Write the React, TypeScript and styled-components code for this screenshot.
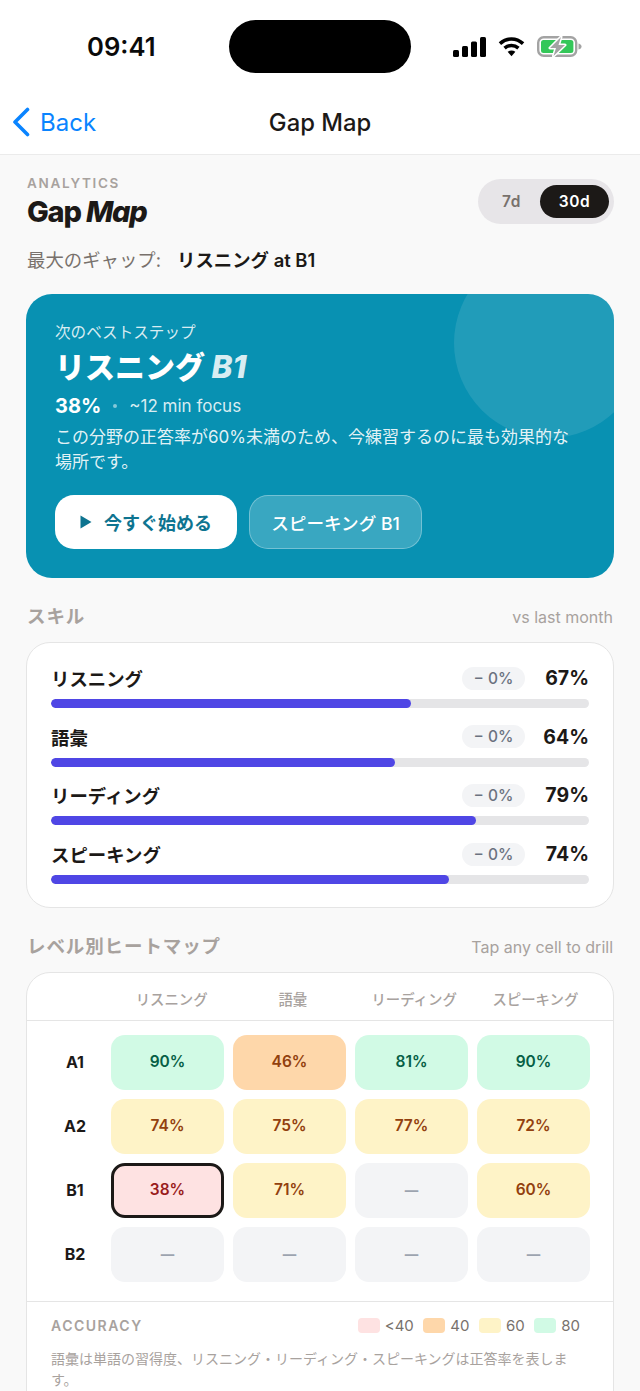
import React from "react";
import styled, { createGlobalStyle } from "styled-components";

const Global = createGlobalStyle`
  html, body { margin: 0; padding: 0; background: #f9f9f9; }
  body { width: 640px; height: 1391px; overflow: hidden; font-family: Inter, "Noto Sans CJK JP", sans-serif; -webkit-font-smoothing: antialiased; }
  * { box-sizing: border-box; }
`;

const Screen = styled.div`
  width: 640px;
  height: 1391px;
  overflow: hidden;
  display: flex;
  flex-direction: column;
`;

const TopArea = styled.header`
  height: 155px;
  background: #fff;
  border-bottom: 1px solid #ebebeb;
  flex: none;
`;

const StatusBar = styled.div`
  height: 88px;
  padding-top: 20px;
  display: grid;
  grid-template-columns: 229px 182px 229px;
`;

const Time = styled.div`
  height: 53px;
  padding-left: 87px;
  display: flex;
  align-items: center;
  font-size: 25.6px;
  font-weight: 600;
  color: #0a0a0a;
`;

const Island = styled.div`
  height: 53px;
  border-radius: 27px;
  background: #000;
`;

const StatusIcons = styled.div`
  height: 53px;
  padding-left: 42px;
  display: flex;
  align-items: center;
  gap: 12px;
`;

const NavBar = styled.div`
  height: 66px;
  padding: 2px 0 0 12px;
  position: relative;
  display: flex;
  align-items: center;
`;

const BackLink = styled.div`
  display: flex;
  align-items: center;
  gap: 10px;
  color: #0a84ff;
  font-size: 24px;
  font-weight: 400;
`;

const NavTitle = styled.div`
  position: absolute;
  left: 0;
  right: 0;
  text-align: center;
  font-size: 23.8px;
  font-weight: 500;
  color: #1c1917;
`;

const Content = styled.main`
  padding: 20px 26px 0;
  display: flex;
  flex-direction: column;
`;

const TitleRow = styled.div`
  display: flex;
  justify-content: space-between;
  align-items: flex-start;
`;

const Eyebrow = styled.div`
  font-size: 13.5px;
  line-height: 17px;
  font-weight: 600;
  letter-spacing: 1.7px;
  color: #a8a29e;
  padding-left: 1px;
`;

const PageTitle = styled.h1`
  margin: 2px 0 0;
  font-size: 29px;
  line-height: 36px;
  font-weight: 800;
  letter-spacing: -1.2px;
  color: #1c1917;
  padding-left: 1px;
  em { font-style: italic; }
`;

const Toggle = styled.div`
  margin-top: 4px;
  width: 136px;
  height: 45px;
  border-radius: 23px;
  background: #e7e5e8;
  padding: 6px 5px;
  display: grid;
  grid-template-columns: 1fr 69px;
`;

const ToggleOption = styled.div<{ $active?: boolean }>`
  border-radius: 17px;
  display: flex;
  align-items: center;
  justify-content: center;
  font-size: 15.5px;
  font-weight: 600;
  letter-spacing: 0.6px;
  color: ${(p) => (p.$active ? "#fff" : "#78716c")};
  background: ${(p) => (p.$active ? "#1c1917" : "transparent")};
`;

const GapLine = styled.div`
  margin-top: 18px;
  padding-left: 1px;
  display: flex;
  gap: 16px;
  font-size: 18.4px;
  line-height: 24px;
  color: #78716c;
  strong { color: #1c1917; font-weight: 600; }
`;

const HeroCard = styled.section`
  position: relative;
  overflow: hidden;
  margin-top: 22px;
  height: 284px;
  border-radius: 26px;
  background: #0891b2;
  padding: 29px 29px;
  color: #fff;
`;

const HeroCircle = styled.div`
  position: absolute;
  top: -46px;
  right: -30px;
  width: 190px;
  height: 190px;
  border-radius: 50%;
  background: rgba(255, 255, 255, 0.1);
`;

const HeroInner = styled.div`
  position: relative;
  display: flex;
  flex-direction: column;
`;

const HeroEyebrow = styled.div`
  font-size: 15.6px;
  line-height: 20px;
  color: rgba(255, 255, 255, 0.85);
`;

const HeroTitle = styled.h2`
  margin: 0;
  margin-top: 4px;
  font-size: 30px;
  line-height: 40px;
  font-weight: 800;
  em { font-size: 31.5px; font-style: italic; color: rgba(255, 255, 255, 0.85); }
`;

const HeroMeta = styled.div`
  margin-top: 6px;
  display: flex;
  align-items: center;
  gap: 12px;
  font-size: 17px;
  line-height: 26px;
  color: rgba(255, 255, 255, 0.85);
  strong { font-size: 20px; font-weight: 700; color: #fff; }
  i { width: 4px; height: 4px; border-radius: 50%; background: rgba(255, 255, 255, 0.5); }
`;

const HeroText = styled.p`
  margin: 6px 0 0;
  font-size: 17px;
  line-height: 25px;
  color: rgba(255, 255, 255, 0.9);
  width: 530px;
`;

const HeroActions = styled.div`
  margin-top: 20px;
  display: flex;
  gap: 12px;
`;

const PrimaryButton = styled.div`
  width: 182px;
  height: 54px;
  border-radius: 19px;
  background: #fff;
  color: #0e7490;
  display: flex;
  align-items: center;
  justify-content: center;
  gap: 12px;
  font-size: 18px;
  font-weight: 700;
`;

const SecondaryButton = styled.div`
  width: 173px;
  height: 54px;
  border-radius: 19px;
  background: rgba(255, 255, 255, 0.2);
  border: 1.5px solid rgba(255, 255, 255, 0.3);
  display: flex;
  align-items: center;
  justify-content: center;
  font-size: 17.6px;
  font-weight: 500;
`;

const SectionHead = styled.div`
  margin-top: 25px;
  height: 26px;
  display: flex;
  justify-content: space-between;
  align-items: center;
  padding: 0 1px;
`;

const SectionTitle = styled.h3`
  margin: 0 0 2px;
  font-size: 18.5px;
  font-weight: 700;
  letter-spacing: 0.9px;
  color: #a8a29e;
`;

const SectionNote = styled.span`
  margin-top: 2px;
  font-size: 16px;
  color: #a8a29e;
`;

const Card = styled.section`
  background: #fff;
  border: 1.5px solid #e5e5e5;
  border-radius: 24px;
`;

const SkillCard = styled(Card)`
  margin-top: 13px;
  height: 266px;
  padding: 23px 24px 0;
  display: flex;
  flex-direction: column;
  gap: 16.7px;
`;

const SkillRow = styled.div`
  display: flex;
  flex-direction: column;
  gap: 9px;
`;

const SkillTop = styled.div`
  height: 24px;
  display: flex;
  align-items: center;
`;

const SkillName = styled.div`
  flex: 1;
  font-size: 18.4px;
  font-weight: 700;
  color: #1c1917;
`;

const DeltaChip = styled.div`
  width: 63px;
  height: 23px;
  border-radius: 12px;
  background: #f3f4f6;
  color: #6b7280;
  font-size: 15.5px;
  font-weight: 500;
  display: flex;
  align-items: center;
  justify-content: center;
`;

const SkillPct = styled.div`
  width: 64px;
  text-align: right;
  font-size: 19.5px;
  font-weight: 700;
  color: #1c1917;
`;

const Track = styled.div`
  height: 9px;
  border-radius: 5px;
  background: #e5e5e7;
  overflow: hidden;
`;

const Fill = styled.div`
  height: 100%;
  border-radius: 5px;
  background: #4f46e5;
`;

const HeatCard = styled(Card)`
  margin-top: 13px;
  height: 520px;
`;

const HeatHeader = styled.div`
  height: 48px;
  border-bottom: 1.5px solid #e5e5e5;
  padding: 3px 17px 0 84px;
  display: grid;
  grid-template-columns: repeat(4, 1fr);
  align-items: center;
`;

const HeatColumn = styled.div`
  text-align: center;
  font-size: 14.4px;
  font-weight: 500;
  color: #a8a29e;
`;

const HeatBody = styled.div`
  height: 281px;
  padding: 14px 21px 0 25px;
  display: grid;
  grid-template-columns: 50px repeat(4, 113px);
  grid-auto-rows: 55px;
  column-gap: 9px;
  row-gap: 9px;
  border-bottom: 1.5px solid #e5e5e5;
`;

const RowLabel = styled.div`
  padding: 0 4px 2px 0;
  display: flex;
  align-items: center;
  justify-content: center;
  font-size: 16px;
  font-weight: 700;
  color: #1c1917;
`;

const tones = {
  green: ["#d1fae5", "#065f46"],
  orange: ["#fed7aa", "#92400e"],
  yellow: ["#fef3c7", "#92400e"],
  red: ["#fee2e2", "#991b1b"],
  empty: ["#f3f4f6", "#9ca3af"],
} as const;
type Tone = keyof typeof tones;

const Cell = styled.div<{ $tone: Tone; $selected?: boolean }>`
  padding-bottom: 2px;
  border-radius: 14px;
  background: ${(p) => tones[p.$tone][0]};
  color: ${(p) => tones[p.$tone][1]};
  border: ${(p) => (p.$selected ? "3px solid #1c1917" : "none")};
  display: flex;
  align-items: center;
  justify-content: center;
  font-size: ${(p) => (p.$tone === "empty" ? "13.5px" : "15.5px")};
  font-weight: ${(p) => (p.$tone === "empty" ? 800 : 600)};
`;

const Footer = styled.div`
  padding: 11px 24px 0;
`;

const LegendRow = styled.div`
  height: 24px;
  display: flex;
  align-items: center;
  justify-content: space-between;
  padding-right: 9px;
`;

const LegendTitle = styled.div`
  font-size: 14px;
  font-weight: 600;
  letter-spacing: 1.5px;
  color: #a8a29e;
`;

const Legend = styled.div`
  display: flex;
  gap: 9.5px;
`;

const LegendItem = styled.div`
  display: flex;
  align-items: center;
  gap: 5px;
  font-size: 15px;
  color: #78716c;
`;

const Swatch = styled.span<{ $tone: Tone }>`
  width: 22px;
  height: 15px;
  border-radius: 4px;
  background: ${(p) => tones[p.$tone][0]};
`;

const FootNote = styled.p`
  margin: 11px 0 0;
  font-size: 14px;
  line-height: 21px;
  color: #a8a29e;
`;

const skills = [
  { name: "リスニング", pct: 67 },
  { name: "語彙", pct: 64 },
  { name: "リーディング", pct: 79 },
  { name: "スピーキング", pct: 74 },
];

const columns = ["リスニング", "語彙", "リーディング", "スピーキング"];

const heat: { level: string; cells: { v: string; t: Tone; s?: boolean }[] }[] = [
  { level: "A1", cells: [{ v: "90%", t: "green" }, { v: "46%", t: "orange" }, { v: "81%", t: "green" }, { v: "90%", t: "green" }] },
  { level: "A2", cells: [{ v: "74%", t: "yellow" }, { v: "75%", t: "yellow" }, { v: "77%", t: "yellow" }, { v: "72%", t: "yellow" }] },
  { level: "B1", cells: [{ v: "38%", t: "red", s: true }, { v: "71%", t: "yellow" }, { v: "—", t: "empty" }, { v: "60%", t: "yellow" }] },
  { level: "B2", cells: [{ v: "—", t: "empty" }, { v: "—", t: "empty" }, { v: "—", t: "empty" }, { v: "—", t: "empty" }] },
];

const legend: { label: string; t: Tone }[] = [
  { label: "<40", t: "red" },
  { label: "40", t: "orange" },
  { label: "60", t: "yellow" },
  { label: "80", t: "green" },
];

const Signal = () => (
  <svg width="33" height="20" viewBox="0 0 33 20">
    <rect x="0" y="13" width="6" height="7" rx="1.5" fill="#000" />
    <rect x="9" y="9" width="6" height="11" rx="1.5" fill="#000" />
    <rect x="18" y="4.5" width="6" height="15.5" rx="1.5" fill="#000" />
    <rect x="27" y="0" width="6" height="20" rx="1.5" fill="#000" />
  </svg>
);

const Wifi = () => (
  <svg width="27" height="21" viewBox="0 0 28 21" fill="none">
    <path d="M2 7.5C9 1 19 1 26 7.5" stroke="#000" strokeWidth="3.6" />
    <path d="M6.8 12.2C11 8.4 17 8.4 21.2 12.2" stroke="#000" strokeWidth="3.6" />
    <path d="M10 16 14 20.5 18 16C15.6 14.2 12.4 14.2 10 16Z" fill="#000" />
  </svg>
);

const Battery = () => (
  <svg width="45" height="21" viewBox="0 0 45 21" fill="none">
    <rect x="1.2" y="1.2" width="38" height="18.6" rx="5.5" stroke="#a3a3a3" strokeWidth="2.4" />
    <rect x="4" y="4" width="32.4" height="13" rx="2.5" fill="#34c759" />
    <path d="M24 1 13 12H19L16.5 20 28 9H21.5Z" fill="#a3a3a3" stroke="#fff" strokeWidth="3" strokeLinejoin="round" paintOrder="stroke" />
    <path d="M41.5 7.5C43.5 8 44.5 9 44.5 10.5S43.5 13 41.5 13.5Z" fill="#a3a3a3" />
  </svg>
);

const Chevron = () => (
  <svg width="18" height="30" viewBox="0 0 18 30" fill="none">
    <path d="M15.5 2.5 3 15l12.5 12.5" stroke="#0a84ff" strokeWidth="3.6" strokeLinecap="round" strokeLinejoin="round" />
  </svg>
);

const Play = () => (
  <svg width="12" height="14" viewBox="0 0 12 14">
    <path d="M0.5 0.5 11.5 7 0.5 13.5Z" fill="#0e7490" />
  </svg>
);

export default function App() {
  return (
    <Screen>
      <Global />
      <TopArea>
        <StatusBar>
          <Time>09:41</Time>
          <Island />
          <StatusIcons>
            <Signal />
            <Wifi />
            <Battery />
          </StatusIcons>
        </StatusBar>
        <NavBar>
          <BackLink>
            <Chevron />
            Back
          </BackLink>
          <NavTitle>Gap Map</NavTitle>
        </NavBar>
      </TopArea>
      <Content>
        <TitleRow>
          <div>
            <Eyebrow>ANALYTICS</Eyebrow>
            <PageTitle>
              Gap <em>Map</em>
            </PageTitle>
          </div>
          <Toggle>
            <ToggleOption>7d</ToggleOption>
            <ToggleOption $active>30d</ToggleOption>
          </Toggle>
        </TitleRow>
        <GapLine>
          <span>最大のギャップ:</span>
          <strong>リスニング at B1</strong>
        </GapLine>
        <HeroCard>
          <HeroCircle />
          <HeroInner>
            <HeroEyebrow>次のベストステップ</HeroEyebrow>
            <HeroTitle>
              リスニング <em>B1</em>
            </HeroTitle>
            <HeroMeta>
              <strong>38%</strong>
              <i />
              <span>~12 min focus</span>
            </HeroMeta>
            <HeroText>この分野の正答率が60%未満のため、今練習するのに最も効果的な場所です。</HeroText>
            <HeroActions>
              <PrimaryButton>
                <Play />
                今すぐ始める
              </PrimaryButton>
              <SecondaryButton>スピーキング B1</SecondaryButton>
            </HeroActions>
          </HeroInner>
        </HeroCard>
        <SectionHead>
          <SectionTitle>スキル</SectionTitle>
          <SectionNote>vs last month</SectionNote>
        </SectionHead>
        <SkillCard>
          {skills.map((s) => (
            <SkillRow key={s.name}>
              <SkillTop>
                <SkillName>{s.name}</SkillName>
                <DeltaChip>− 0%</DeltaChip>
                <SkillPct>{s.pct}%</SkillPct>
              </SkillTop>
              <Track>
                <Fill style={{ width: `${s.pct}%` }} />
              </Track>
            </SkillRow>
          ))}
        </SkillCard>
        <SectionHead>
          <SectionTitle>レベル別ヒートマップ</SectionTitle>
          <SectionNote>Tap any cell to drill</SectionNote>
        </SectionHead>
        <HeatCard>
          <HeatHeader>
            {columns.map((c) => (
              <HeatColumn key={c}>{c}</HeatColumn>
            ))}
          </HeatHeader>
          <HeatBody>
            {heat.map((row) => (
              <React.Fragment key={row.level}>
                <RowLabel>{row.level}</RowLabel>
                {row.cells.map((c, i) => (
                  <Cell key={i} $tone={c.t} $selected={c.s}>
                    {c.v}
                  </Cell>
                ))}
              </React.Fragment>
            ))}
          </HeatBody>
          <Footer>
            <LegendRow>
              <LegendTitle>ACCURACY</LegendTitle>
              <Legend>
                {legend.map((l) => (
                  <LegendItem key={l.label}>
                    <Swatch $tone={l.t} />
                    {l.label}
                  </LegendItem>
                ))}
              </Legend>
            </LegendRow>
            <FootNote>語彙は単語の習得度、リスニング・リーディング・スピーキングは正答率を表します。</FootNote>
          </Footer>
        </HeatCard>
      </Content>
    </Screen>
  );
}
